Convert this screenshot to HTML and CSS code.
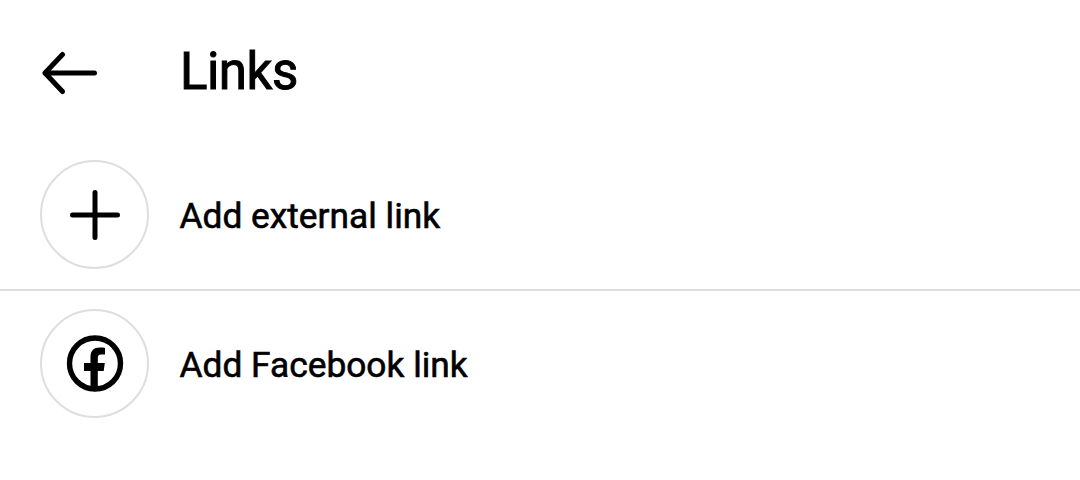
FILE: index.html
```html
<!DOCTYPE html>
<html lang="en">
<head>
    <meta charset="UTF-8">
    <meta name="viewport" content="width=device-width, initial-scale=1.0">
    <title>Links</title>
    <link rel="stylesheet" href="styles.css">
</head>
<body>
    <div class="header">
        <button type="button" class="back-btn" aria-label="Back">
            <svg width="60" height="44" viewBox="0 0 60 44" fill="none" stroke="#000" stroke-width="5" stroke-linecap="round" stroke-linejoin="round">
                <path d="M54.500 22H5M22.500 3.500L5 22L22.500 40.500"/>
            </svg>
        </button>
        <h1>Links</h1>
    </div>

    <div class="link-row">
        <div class="circle">
            <svg width="52" height="52" viewBox="0 0 52 52" fill="none" stroke="#000" stroke-width="5" stroke-linecap="round">
                <path d="M26 3.500V48.500M3.500 26H48.500"/>
            </svg>
        </div>
        <span class="link-label">Add external link</span>
    </div>
    <div class="divider"></div>
    <div class="link-row">
        <div class="circle">
            <svg width="58" height="58" viewBox="0 0 58 58">
                <circle cx="29" cy="28.500" r="25.500" fill="none" stroke="#000" stroke-width="5.400"/>
                <path d="M24.500 54V36H18V28H24.500V22C24.500 15.500 28 12.500 33.500 12.500C36 12.500 38 12.700 39 12.900V19.500H35C32.500 19.500 31.800 20.800 31.800 23V28H38.800L37.700 36H31.800V54Z" fill="#000"/>
            </svg>
        </div>
        <span class="link-label">Add Facebook link</span>
    </div>
</body>
</html>
```

FILE: styles.css
```css
body {
    font-family: 'Roboto', sans-serif;
    background-color: #fff;
    color: #000;
    margin: 0;
    padding: 0;
}

.header {
    display: flex;
    align-items: center;
    height: 142px;
    padding-left: 40px;
}

.back-btn {
    display: flex;
    width: 140px;
    padding: 4px 0 0;
    border: none;
    background: none;
    cursor: pointer;
}

h1 {
    margin: 0;
    font-size: 51px;
    font-weight: 400;
    letter-spacing: -0.5px;
    -webkit-text-stroke: 1px #000;
}

.link-row {
    display: flex;
    align-items: center;
    gap: 30.5px;
    padding: 18px 40px 20px;
}

.circle {
    display: flex;
    justify-content: center;
    align-items: center;
    width: 109px;
    height: 109px;
    border: 2px solid #dedede;
    border-radius: 50%;
    box-sizing: border-box;
}

.link-label {
    padding-top: 2px;
    font-size: 35.3px;
    font-weight: 400;
    -webkit-text-stroke: 0.6px #000;
}

.divider {
    height: 2px;
    background-color: #dedede;
}
```
